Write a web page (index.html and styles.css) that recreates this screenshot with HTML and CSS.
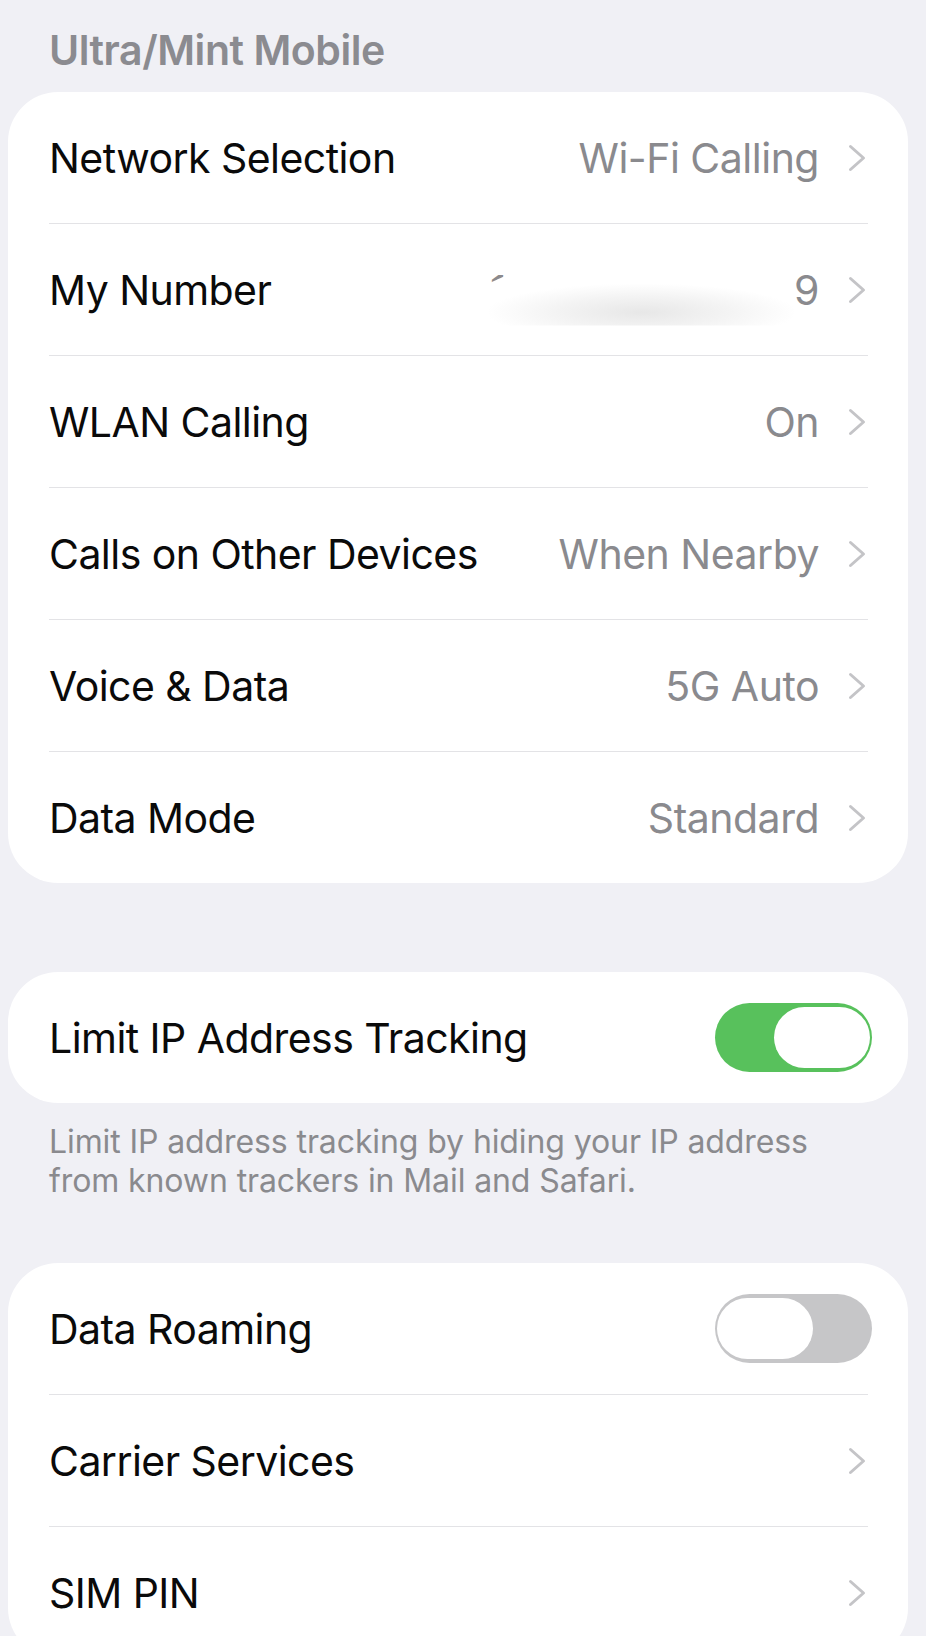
FILE: index.html
```html
<!DOCTYPE html>
<html lang="en">
<head>
<meta charset="utf-8">
<title>Cellular – Ultra/Mint Mobile</title>
<link rel="stylesheet" href="styles.css">
</head>
<body>
<main class="screen">
  <h2 class="section-header">Ultra/Mint Mobile</h2>

  <section class="group">
    <div class="row">
      <span class="label">Network Selection</span>
      <span class="value">Wi-Fi Calling</span>
      <svg class="chevron" viewBox="0 0 18 28"><polyline points="2.5,2.5 15.5,14 2.5,25.5"/></svg>
    </div>
    <div class="row">
      <span class="label">My Number</span>
      <span class="value number"><span class="digit-hidden">1</span><span class="redact"></span>9</span>
      <svg class="chevron" viewBox="0 0 18 28"><polyline points="2.5,2.5 15.5,14 2.5,25.5"/></svg>
    </div>
    <div class="row">
      <span class="label">WLAN Calling</span>
      <span class="value">On</span>
      <svg class="chevron" viewBox="0 0 18 28"><polyline points="2.5,2.5 15.5,14 2.5,25.5"/></svg>
    </div>
    <div class="row">
      <span class="label">Calls on Other Devices</span>
      <span class="value">When Nearby</span>
      <svg class="chevron" viewBox="0 0 18 28"><polyline points="2.5,2.5 15.5,14 2.5,25.5"/></svg>
    </div>
    <div class="row">
      <span class="label">Voice &amp; Data</span>
      <span class="value">5G Auto</span>
      <svg class="chevron" viewBox="0 0 18 28"><polyline points="2.5,2.5 15.5,14 2.5,25.5"/></svg>
    </div>
    <div class="row">
      <span class="label">Data Mode</span>
      <span class="value">Standard</span>
      <svg class="chevron" viewBox="0 0 18 28"><polyline points="2.5,2.5 15.5,14 2.5,25.5"/></svg>
    </div>
  </section>

  <section class="group group-spaced">
    <div class="row">
      <span class="label">Limit IP Address Tracking</span>
      <span class="toggle toggle-on"><span class="knob"></span></span>
    </div>
  </section>
  <p class="footer">Limit IP address tracking by hiding your IP address<br>from known trackers in Mail and Safari.</p>

  <section class="group">
    <div class="row">
      <span class="label">Data Roaming</span>
      <span class="toggle toggle-off"><span class="knob"></span></span>
    </div>
    <div class="row">
      <span class="label">Carrier Services</span>
      <svg class="chevron" viewBox="0 0 18 28"><polyline points="2.5,2.5 15.5,14 2.5,25.5"/></svg>
    </div>
    <div class="row">
      <span class="label">SIM PIN</span>
      <svg class="chevron" viewBox="0 0 18 28"><polyline points="2.5,2.5 15.5,14 2.5,25.5"/></svg>
    </div>
  </section>
</main>
</body>
</html>
```

FILE: styles.css
```css
html, body {
  margin: 0;
  background: #f0f0f5;
}

body {
  font-family: Inter, "Liberation Sans", Arial, sans-serif;
  color: #0a0a0a;
}

.screen {
  padding: 0 18px 0 8px;
}

.section-header {
  margin: 0;
  padding: 25px 0 17px 41px;
  font-size: 41px;
  line-height: 50px;
  font-weight: 600;
  letter-spacing: -0.45px;
  color: #8b8b90;
}

.group {
  background: #ffffff;
  border-radius: 50px;
}

.group-spaced {
  margin-top: 89px;
}

.row {
  display: flex;
  align-items: center;
  height: 131px;
  margin: 0 40px 0 41px;
  border-bottom: 1px solid #e3e3e6;
}

.row:last-child {
  border-bottom: none;
}

.label {
  flex: 1;
  font-size: 41px;
  letter-spacing: -0.55px;
  white-space: nowrap;
}

.value {
  margin-right: 29px;
  font-size: 41px;
  letter-spacing: -0.5px;
  color: #8a8a8e;
  white-space: nowrap;
}

.number {
  display: inline-flex;
  align-items: center;
}

.digit-hidden {
  color: #8a8a8e;
}

.redact {
  display: inline-block;
  width: 305px;
  height: 62px;
  margin-left: -17px;
  margin-top: 10px;
  background: radial-gradient(ellipse 60% 55% at 50% 78%, #e7e7e7 0%, #f3f3f3 45%, #ffffff 85%);
  clip-path: polygon(0 32%, 8% 14%, 100% 0, 100% 100%, 0 100%);
}

.chevron {
  width: 18px;
  height: 28px;
  margin-right: 2px;
  flex-shrink: 0;
}

.chevron polyline {
  fill: none;
  stroke: #c4c4c7;
  stroke-width: 3;
  stroke-linecap: round;
  stroke-linejoin: round;
}

.toggle {
  display: flex;
  align-items: center;
  box-sizing: border-box;
  width: 157px;
  height: 69px;
  margin-right: -4px;
  border-radius: 35px;
  flex-shrink: 0;
}

.toggle-on {
  background: #58c15c;
  justify-content: flex-end;
  padding: 4px 2px;
}

.toggle-off {
  background: #c6c6c8;
  justify-content: flex-start;
  padding: 4px 2px;
}

.knob {
  width: 96px;
  height: 61px;
  border-radius: 31px;
  background: #ffffff;
}

.footer {
  margin: 0;
  padding: 19px 0 63px 41px;
  font-size: 32px;
  line-height: 39px;
  letter-spacing: -0.1px;
  color: #8a8a8e;
}
```
